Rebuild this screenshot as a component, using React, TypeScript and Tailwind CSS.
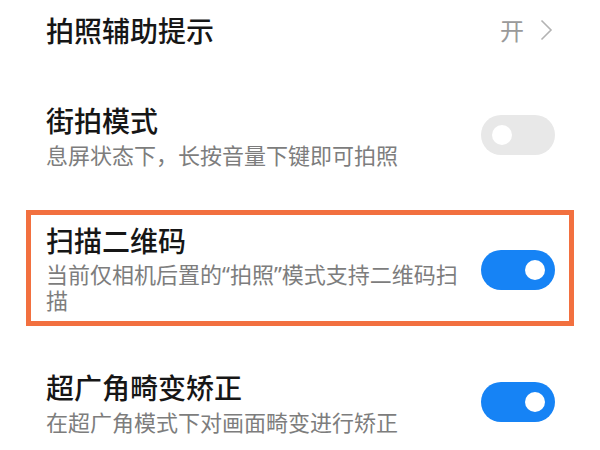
import React from "react";

const font = { fontFamily: '"Noto Sans CJK SC", "Noto Sans", sans-serif' };
const latinFirst = { fontFamily: '"Noto Sans", "Noto Sans CJK SC", sans-serif' };

function Toggle({ on }: { on: boolean }) {
  return (
    <div
      className={
        "flex h-[40px] w-[74px] shrink-0 items-center rounded-full " +
        (on ? "justify-end bg-[#1683f5] pr-[10px]" : "justify-start bg-[#e8e8e8] pl-[11px]")
      }
    >
      <div className="h-[20px] w-[20px] rounded-full bg-white" />
    </div>
  );
}

function Row({
  title,
  subtitle,
  on,
}: {
  title: string;
  subtitle: string;
  on: boolean;
}) {
  return (
    <div className="flex items-center gap-[10px]">
      <div className="flex-1">
        <div className="text-[28px] leading-[28px] font-medium text-[#161616]">{title}</div>
        <div className="mt-[7px] text-[22px] leading-[26px] text-[#7d7d7d]">{subtitle}</div>
      </div>
      <div className="-mt-[4px]">
        <Toggle on={on} />
      </div>
    </div>
  );
}

export default function App() {
  return (
    <div className="h-[450px] w-[600px] overflow-hidden bg-white px-[26px] pt-[16px]" style={font}>
      <div className="flex items-center justify-between px-[20px]">
        <div className="text-[28px] leading-[28px] font-medium text-[#161616]">拍照辅助提示</div>
        <div className="mr-[1px] flex items-center gap-[16px]">
          <span className="text-[24px] leading-[28px] text-[#9a9a9a]">开</span>
          <svg width="13" height="22" viewBox="0 0 13 22" fill="none">
            <polyline points="1.5,1.5 11,11 1.5,20.5" stroke="#b3b3b3" strokeWidth="1.6" />
          </svg>
        </div>
      </div>

      <div className="mt-[62px] pl-[20px] pr-[19px]">
        <Row title="街拍模式" subtitle="息屏状态下，长按音量下键即可拍照" on={false} />
      </div>

      <div className="mt-[43px] border-[5px] border-[#f2703f] pb-[8px] pl-[15px] pr-[14px] pt-[11px]">
        <div className="flex items-center gap-[10px]">
          <div className="flex-1">
            <div className="text-[28px] leading-[28px] font-medium text-[#161616]">扫描二维码</div>
            <div className="mt-[7px] text-[22px] leading-[26px] text-[#7d7d7d]" style={latinFirst}>
              当前仅相机后置的“拍照”模式支持二维码扫描
            </div>
          </div>
          <Toggle on={true} />
        </div>
      </div>

      <div className="mt-[47px] pl-[20px] pr-[19px]">
        <Row title="超广角畸变矫正" subtitle="在超广角模式下对画面畸变进行矫正" on={true} />
      </div>
    </div>
  );
}
